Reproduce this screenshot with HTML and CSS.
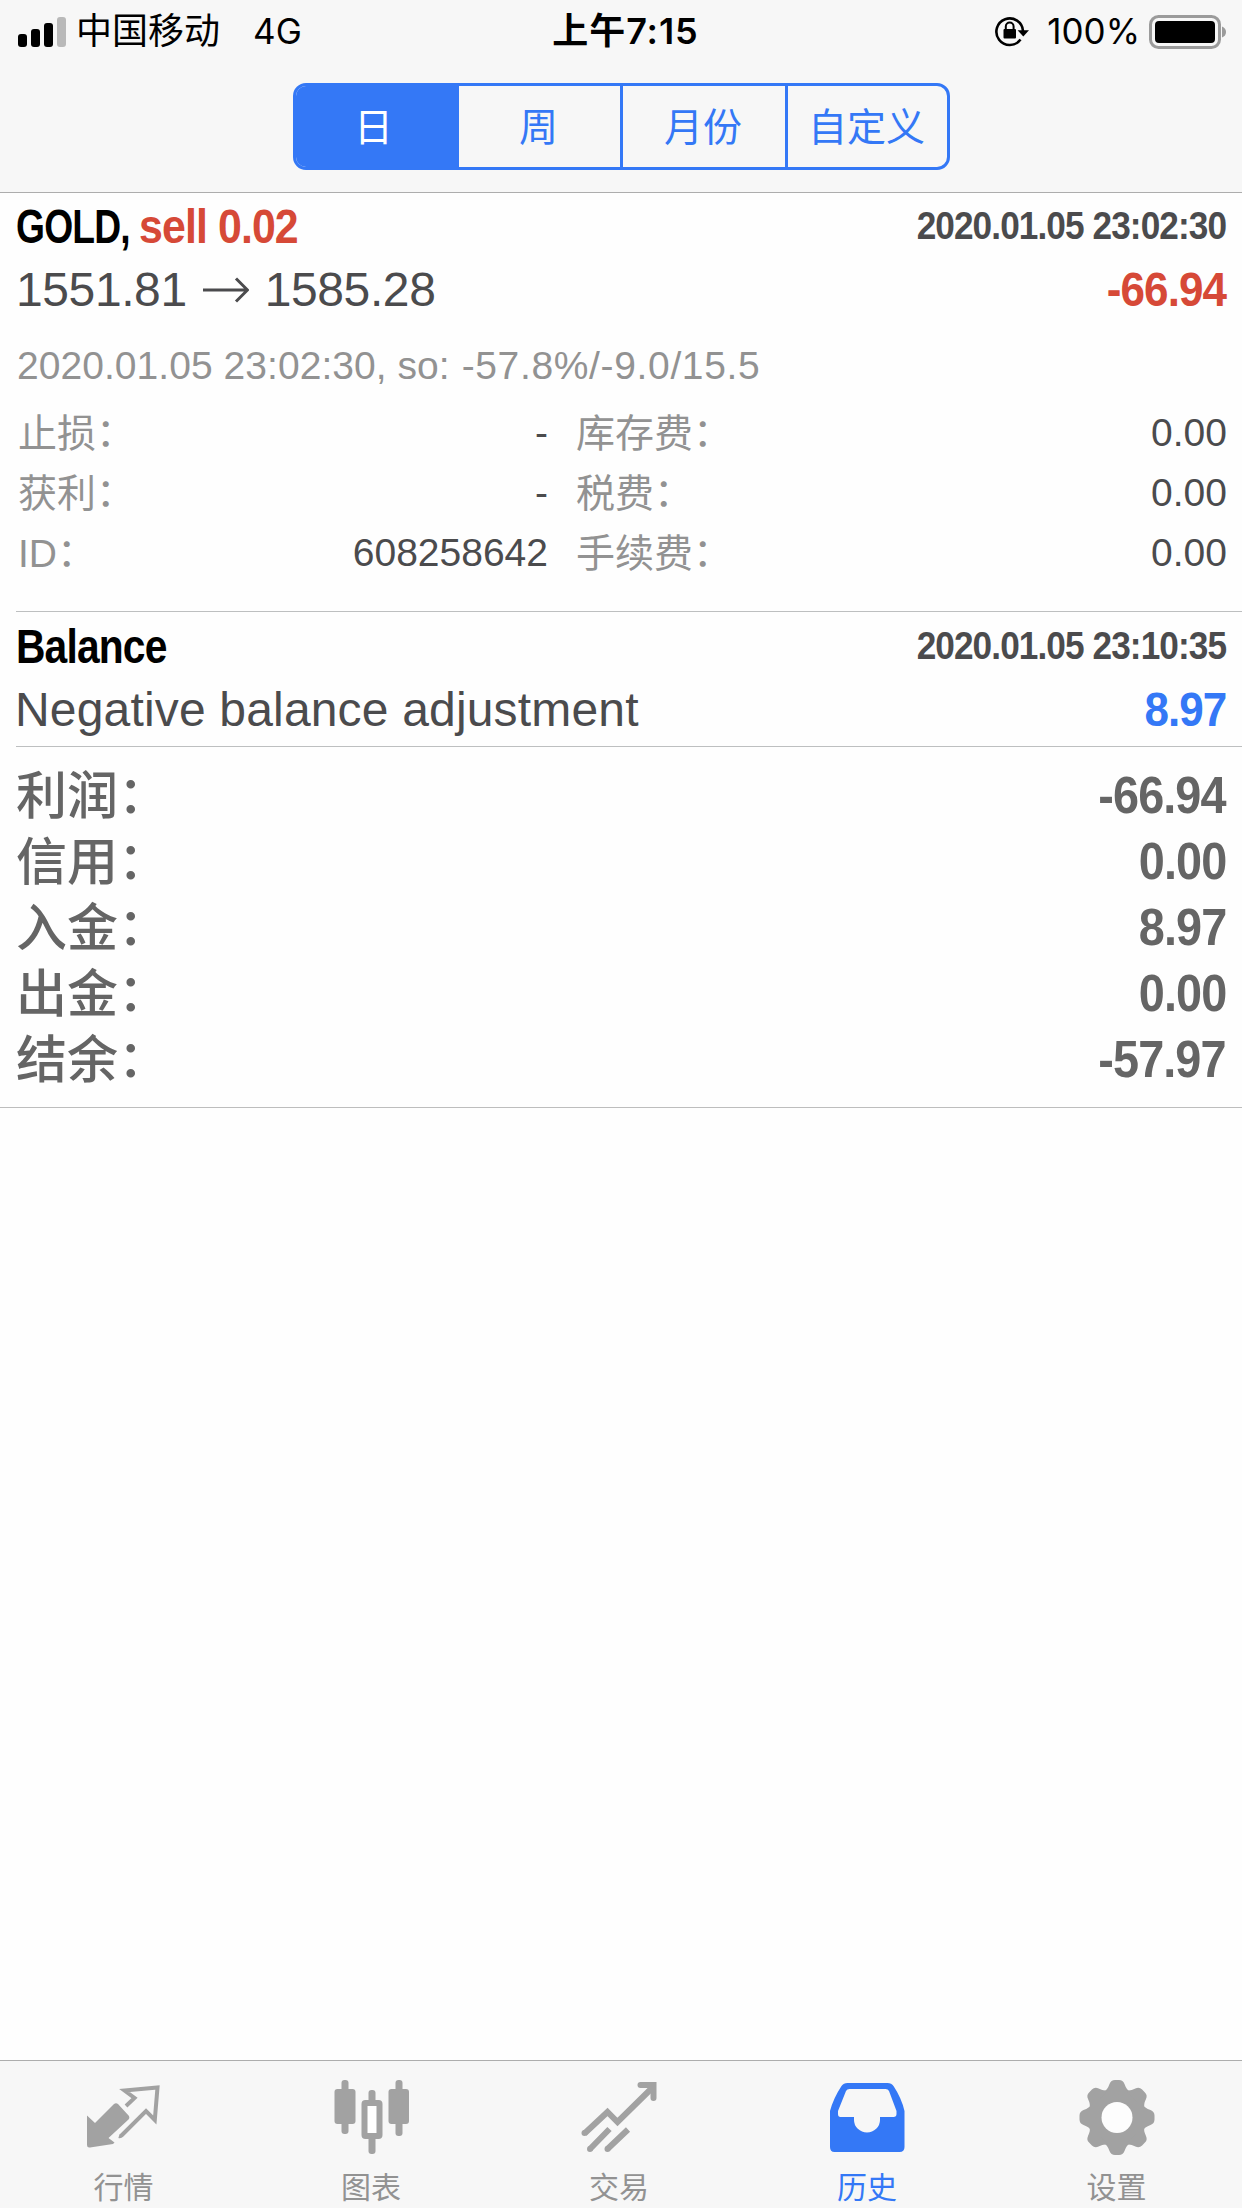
FILE: index.html
```html
<!DOCTYPE html>
<html lang="zh-CN">
<head>
<meta charset="utf-8">
<title>历史</title>
<link rel="stylesheet" href="styles.css">
</head>
<body>
<div class="screen">
  <header class="header">
    <div class="status">
      <div class="status-left">
        <svg class="signal" width="48" height="30" viewBox="0 0 48 30">
          <rect x="0" y="17" width="9" height="13" rx="3"/>
          <rect x="13" y="12" width="9" height="18" rx="3"/>
          <rect x="26" y="6" width="9" height="24" rx="3"/>
          <rect x="39" y="0" width="9" height="30" rx="3" fill="#b9b9b9"/>
        </svg>
        <span class="carrier">中国移动</span>
        <span class="network">4G</span>
      </div>
      <div class="time">上午7:15</div>
      <div class="status-right">
        <svg class="lock" width="36" height="32" viewBox="0 0 36 32">
          <path d="M26.500 24.500A13.300 13.300 0 1 1 29 16" fill="none" stroke="#000" stroke-width="2.6"/>
          <path d="M23.600 15.200H35L29.300 21.500Z"/>
          <rect x="9.500" y="14" width="12.500" height="9.500" rx="1"/>
          <path d="M11.800 15V11.500a3.900 3.900 0 0 1 7.800 0V15" fill="none" stroke="#000" stroke-width="2"/>
        </svg>
        <span class="percent">100%</span>
        <svg class="battery" width="78" height="34" viewBox="0 0 78 34">
          <rect x="1.500" y="1.500" width="69" height="31" rx="8" fill="none" stroke="#9b9b9b" stroke-width="3"/>
          <rect x="6" y="6" width="60" height="22" rx="4"/>
          <path d="M73 11.500q4 1.500 4 5.500t-4 5.500z" fill="#9b9b9b"/>
        </svg>
      </div>
    </div>
    <div class="segments">
      <div class="segment active">日</div>
      <div class="segment">周</div>
      <div class="segment">月份</div>
      <div class="segment">自定义</div>
    </div>
  </header>

  <main class="content">
    <section class="deal">
      <div class="row">
        <div class="title"><span class="symbol">GOLD,</span><span class="side">sell 0.02</span></div>
        <span class="date">2020.01.05 23:02:30</span>
      </div>
      <div class="row">
        <div class="prices"><span>1551.81</span><svg width="46" height="28" viewBox="0 0 46 28"><path d="M0 14H44M33 2.500L44.500 14L33 25.500" fill="none" stroke="#4b4b4d" stroke-width="3"/></svg><span>1585.28</span></div>
        <span class="amount loss">-66.94</span>
      </div>
      <div class="comment">2020.01.05 23:02:30, so: <span class="stopout">-57.8%/-9.0/15.5</span></div>
      <div class="details">
        <span class="label">止损<i>：</i></span><span class="value">-</span><span class="label">库存费<i>：</i></span><span class="value">0.00</span>
        <span class="label">获利<i>：</i></span><span class="value">-</span><span class="label">税费<i>：</i></span><span class="value">0.00</span>
        <span class="label">ID<i>：</i></span><span class="value">608258642</span><span class="label">手续费<i>：</i></span><span class="value">0.00</span>
      </div>
    </section>

    <section class="balance">
      <div class="row">
        <span class="heading">Balance</span>
        <span class="date">2020.01.05 23:10:35</span>
      </div>
      <div class="row">
        <span class="note">Negative balance adjustment</span>
        <span class="amount gain">8.97</span>
      </div>
    </section>

    <section class="totals">
      <div class="total"><span class="name">利润<i>：</i></span><span class="sum">-66.94</span></div>
      <div class="total"><span class="name">信用<i>：</i></span><span class="sum">0.00</span></div>
      <div class="total"><span class="name">入金<i>：</i></span><span class="sum">8.97</span></div>
      <div class="total"><span class="name">出金<i>：</i></span><span class="sum">0.00</span></div>
      <div class="total"><span class="name">结余<i>：</i></span><span class="sum">-57.97</span></div>
    </section>
  </main>

  <nav class="tabs">
    <div class="tab">
      <svg width="76" height="76" viewBox="1 0 76 76">
        <path d="M2 35.500L10 43L29 24Q31 22.500 33 24L44 36Q45 38 43.500 39.500L23.500 58L29.500 62.500L28 64L5 67.500Q2 68 2 65Z"/>
        <path d="M41 26L49.500 18L39.500 10.500L72.500 7.500L69.800 40L61 31L37 55Q35.500 56.500 34 56" fill="none" stroke="#a2a2a2" stroke-width="4"/>
      </svg>
      <span>行情</span>
    </div>
    <div class="tab">
      <svg width="76" height="76" viewBox="-1 0 76 76">
        <rect x="7.500" y="0" width="7" height="54" rx="3"/><rect x="0.500" y="9" width="21" height="35" rx="3"/>
        <rect x="61.500" y="0" width="7" height="56" rx="3"/><rect x="54.500" y="9" width="20.500" height="35" rx="3"/>
        <rect x="34.500" y="10" width="7" height="14" rx="3"/><rect x="34.500" y="55" width="7" height="19" rx="3"/>
        <rect x="30.500" y="23" width="15" height="33" rx="1" fill="#fff" stroke="#a2a2a2" stroke-width="6"/>
      </svg>
      <span>图表</span>
    </div>
    <div class="tab">
      <svg width="76" height="76" viewBox="0 0 76 76" fill="none" stroke="#a2a2a2" stroke-width="6">
        <path d="M3.500 53.500L26.500 32L36.500 42L71 8" stroke-linejoin="miter"/>
        <circle cx="3.500" cy="53" r="3" fill="#a2a2a2" stroke="none"/>
        <path d="M59.500 5H72.500V18" stroke-linecap="round"/>
        <path d="M28.500 49L9 69M47 49.500L26.500 69"/>
        <path d="M9 69h0M26.500 69h0" stroke-linecap="round"/>
      </svg>
      <span>交易</span>
    </div>
    <div class="tab active">
      <svg width="76" height="76" viewBox="-0.500 0 76 76">
        <path fill-rule="evenodd" d="M18 3H58Q62 3 64 6Q72 18 75 31V67Q75 72 70 72H5Q0.500 72 0.500 67V31Q4 18 12 6Q14 3 18 3ZM20 9Q17.500 9 16.500 11L8.500 31V34Q8.500 37 11 37H24.500V40A13 12.500 0 0 0 50.500 40V37H64Q67 37 67 34V31L59.500 11Q58.500 9 56 9Z"/>
      </svg>
      <span>历史</span>
    </div>
    <div class="tab">
      <svg width="76" height="76" viewBox="0 0 76 76">
        <circle cx="38" cy="37.500" r="29"/>
        <g id="teeth">
          <path id="tooth" d="M24.500 12Q28.500 10 30.500 4Q32 0 36 0H40Q44 0 45.500 4Q47.500 10 51.500 12Z"/>
          <use href="#tooth" transform="rotate(45 38 37.500)"/><use href="#tooth" transform="rotate(90 38 37.500)"/>
          <use href="#tooth" transform="rotate(135 38 37.500)"/><use href="#tooth" transform="rotate(180 38 37.500)"/>
          <use href="#tooth" transform="rotate(225 38 37.500)"/><use href="#tooth" transform="rotate(270 38 37.500)"/>
          <use href="#tooth" transform="rotate(315 38 37.500)"/>
        </g>
        <circle cx="38" cy="37.500" r="15.500" fill="#fdfdfd"/>
      </svg>
      <span>设置</span>
    </div>
  </nav>
</div>
</body>
</html>
```
FILE: styles.css
```css
* { box-sizing: border-box; }

body {
  margin: 0;
  font-family: "Liberation Sans", "Noto Sans CJK SC", sans-serif;
  color: #4b4b4d;
}

svg { display: block; }

.screen {
  width: 1242px;
  height: 2208px;
  display: flex;
  flex-direction: column;
  background: #fefefe;
}

/* Status bar and period selector */
.header {
  height: 193px;
  background: #f7f7f7;
  border-bottom: 1px solid #adadad;
}

.status {
  height: 60px;
  display: grid;
  grid-template-columns: 1fr auto 1fr;
  padding: 0 15px 0 18px;
  font-family: Inter, "Noto Sans CJK SC", sans-serif;
  font-size: 35px;
  line-height: 63px;
  color: #000;
}

.status-left,
.status-right { display: flex; align-items: center; }
.status-right { justify-content: flex-end; }
.carrier { margin-left: 10px; font-size: 36px; }
.network { margin-left: 33px; }
.time {
  padding-left: 6px;
  font-size: 36px;
  font-weight: 600;
  letter-spacing: .9px;
}
.lock { margin-top: -2px; }
.percent { margin: 0 9px 0 17px; white-space: nowrap; }

.segments {
  width: 657px;
  height: 87px;
  margin: 23px 0 0 293px;
  display: grid;
  grid-template-columns: 160px 164px 165px 162px;
  border: 3px solid #3478f6;
  border-radius: 13px;
  overflow: hidden;
}

.segment {
  padding-right: 2px;
  font-size: 39px;
  line-height: 84px;
  text-align: center;
  color: #3478f6;
  border-left: 3px solid #3478f6;
}

.segment.active {
  padding-right: 5px;
  border-left: 0;
  color: #fff;
  background: #3478f6;
}

/* History list */
.content { flex: 1; }

.row {
  height: 63px;
  display: flex;
  justify-content: space-between;
  padding: 0 16px;
  font-size: 48px;
  line-height: 63px;
  white-space: nowrap;
}

.deal { padding: 2px 0 28px; }

.title { display: flex; font-weight: 700; }
.symbol {
  width: 123px;
  color: #000;
  letter-spacing: -1px;
  transform: scaleX(.775);
  transform-origin: left;
}
.side {
  color: #d64937;
  letter-spacing: -1px;
  transform: scaleX(.893);
  transform-origin: left;
}
.heading {
  font-weight: 700;
  color: #000;
  letter-spacing: -1px;
  transform: scaleX(.85);
  transform-origin: left;
}
.date {
  font-size: 39px;
  line-height: 62px;
  font-weight: 700;
  letter-spacing: -1px;
  transform: scaleX(.902);
  transform-origin: right;
}
.amount {
  font-weight: 700;
  letter-spacing: -1px;
  transform: scaleX(.917);
  transform-origin: right;
}
.loss { color: #d64937; }
.gain { color: #3478f6; }

.prices {
  display: flex;
  align-items: center;
  gap: 16px;
  letter-spacing: -.4px;
}

.comment {
  margin-top: 20px;
  padding-left: 17px;
  font-size: 39px;
  line-height: 50px;
  letter-spacing: .05px;
  color: #929292;
}
.stopout { padding-left: 1px; letter-spacing: .65px; }

.details {
  margin-top: 12px;
  padding: 0 15px 0 18px;
  display: grid;
  grid-template-columns: 160px 370px 200px 1fr;
  grid-auto-rows: 60px;
  font-size: 39px;
  line-height: 60px;
  white-space: nowrap;
}
.details .label { color: #929292; line-height: 62px; }
.details .value { text-align: right; }
.details .label:nth-child(4n + 3) { padding-left: 28px; }

/* Full-width colons sit raised, at the middle of the characters */
i {
  font-style: normal;
  line-height: 0;
  vertical-align: 1px;
}

.balance {
  margin-left: 16px;
  padding: 3px 0 5px;
  border-top: 1px solid #bdbfc0;
  border-bottom: 1px solid #bdbfc0;
}
.balance .row { padding-left: 0; }
.note { margin-left: -1px; letter-spacing: .17px; }

.totals {
  padding: 16px 0 14px;
  border-bottom: 1px solid #bdbdbd;
}
.total {
  height: 66px;
  display: flex;
  justify-content: space-between;
  padding: 0 16px;
  font-size: 51px;
  line-height: 66px;
  font-weight: 500;
  color: #656565;
}
.name { line-height: 68px; }
.sum {
  font-weight: 700;
  letter-spacing: -1px;
  transform: scaleX(.918);
  transform-origin: right;
}

/* Bottom tab bar */
.tabs {
  height: 148px;
  padding-top: 19px;
  display: grid;
  grid-template-columns: 247px 248px 248px 248px 251px;
  background: #f7f7f7;
  border-top: 1px solid #adadad;
}
.tab {
  display: flex;
  flex-direction: column;
  align-items: center;
  font-size: 30px;
  line-height: 40px;
  color: #929292;
  fill: #a2a2a2;
}
.tab span { margin-top: 12px; }
.tab.active { color: #3478f6; fill: #3478f6; }
```
